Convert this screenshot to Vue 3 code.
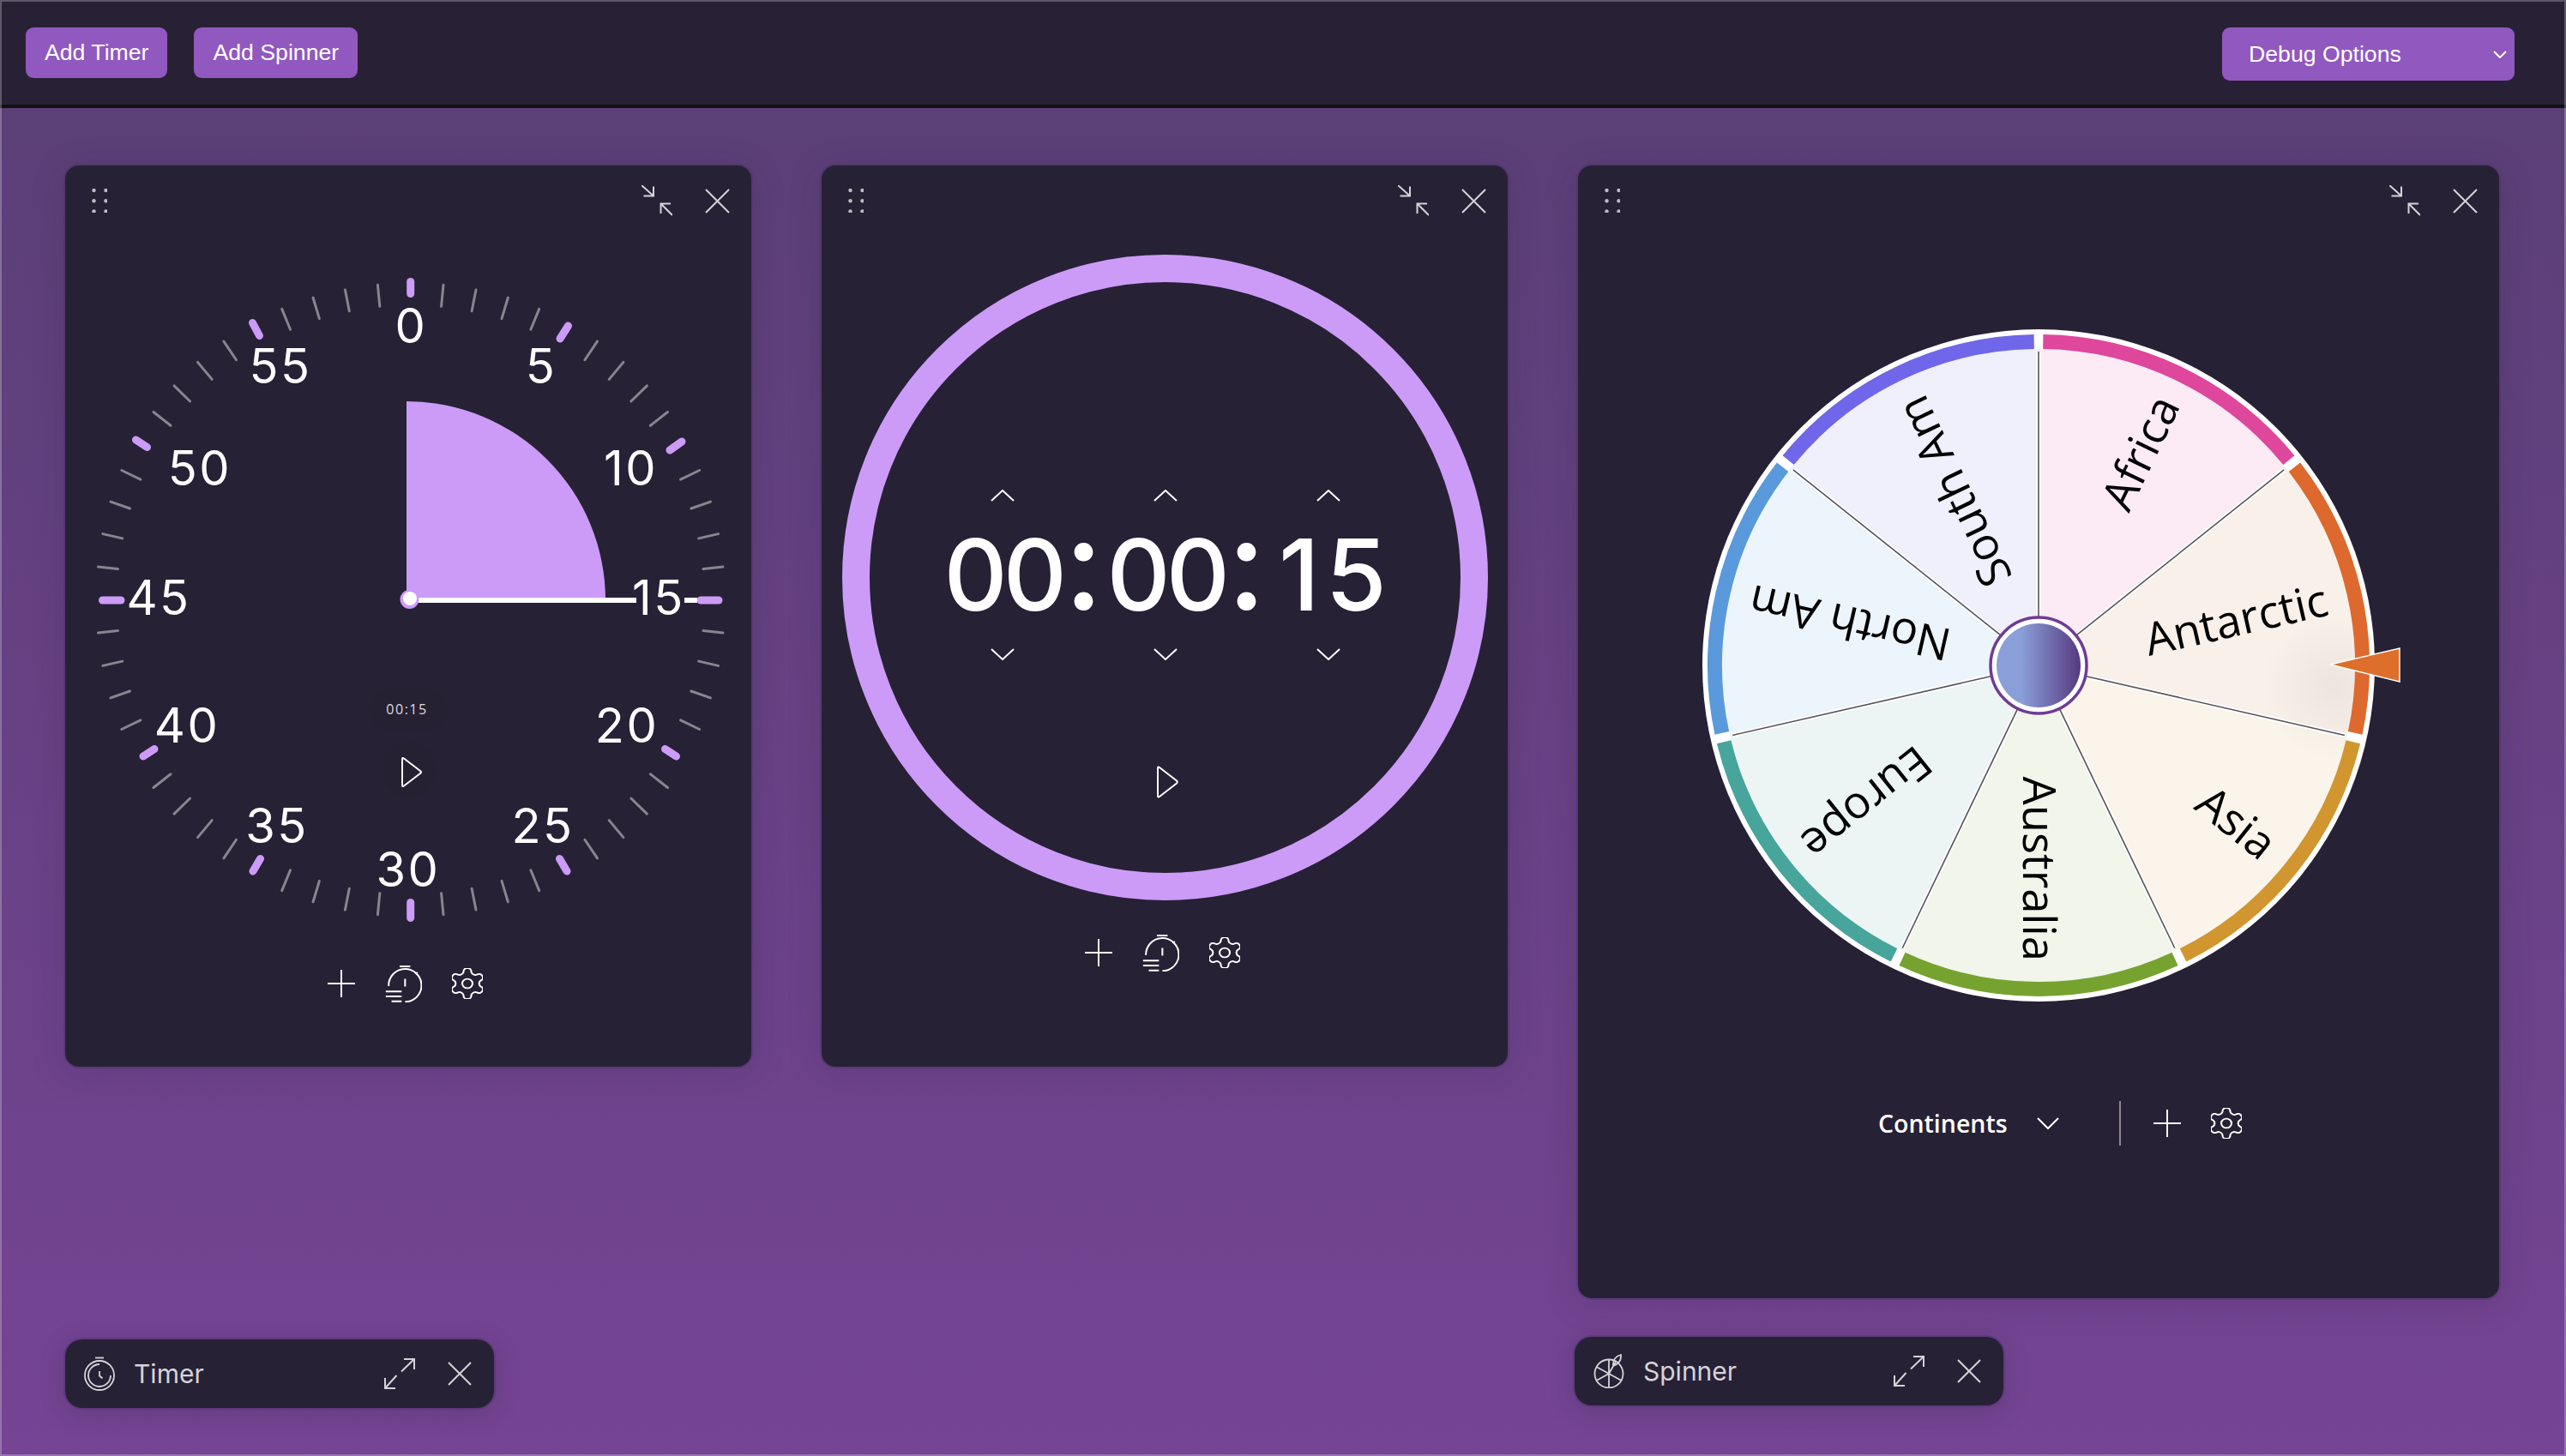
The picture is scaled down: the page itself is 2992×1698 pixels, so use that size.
<template>
  <div class="page">
    <header class="topbar">
      <button class="btn">Add Timer</button>
      <button class="btn">Add Spinner</button>
      <div class="debug-select">
        <span>Debug Options</span>
        <svg class="debug-chevron" width="16" height="9" viewBox="0 0 16 9"><path d="M1 1l7 7 7-7" /></svg>
      </div>
    </header>

    <main class="board">
      <div class="windows">
        <!-- analog timer -->
        <section class="panel panel-dial">
          <div class="panel-head">
            <svg class="grip" width="18" height="28" viewBox="0 0 18 28">
              <circle v-for="d in gripDots" :key="d.id" :cx="d.x" :cy="d.y" r="2.2" />
            </svg>
            <div class="head-actions">
              <svg class="win-icon" width="36" height="36" viewBox="0 0 36 36">
                <path d="M0 0L14 12.5M2.5 12.5H14V1.5M36 35L22.5 21.5M34 21.5H22.5V33" />
              </svg>
              <svg class="win-icon close" width="29" height="29" viewBox="0 0 29 29"><path d="M1 1l27 27M28 1L1 28" /></svg>
            </div>
          </div>

          <svg class="dial" width="800" height="845" viewBox="76 275 800 845">
            <line v-for="t in minorTicks" :key="t.id" class="tick-minor" :x1="t.x1" :y1="t.y1" :x2="t.x2" :y2="t.y2" />
            <line v-for="(t, i) in majorTicks" :key="i" class="tick-major" :x1="t[0]" :y1="t[1]" :x2="t[2]" :y2="t[3]" />
            <path class="wedge" d="M474 700V468A232 232 0 0 1 706 700Z" />
            <line class="hand" x1="477" y1="700" x2="742" y2="700" />
            <line class="hand" x1="798" y1="700" x2="813" y2="700" />
            <circle class="knob-back" cx="477.5" cy="699" r="11" />
            <circle class="knob" cx="478" cy="698" r="8" />
            <text v-for="n in dialNumbers" :key="n.label" class="dial-num" :x="n.x" :y="n.y + 20.5">{{ n.label }}</text>
            <rect class="soft" x="432" y="803" width="88" height="49" rx="22" />
            <text class="dial-time" x="474.5" y="833">00:15</text>
            <circle class="soft" cx="477" cy="898" r="32" />
            <path class="play" d="M469 885.5V915.5Q469 918 471 916.5L490 902Q492 900.5 490 899L471 884.5Q469 883 469 885.5Z" />
          </svg>

          <div class="tools tools-dial">
            <svg class="tool" width="32" height="32" viewBox="0 0 32 32"><path d="M16 0V32M0 16H32" /></svg>
            <svg class="tool stopwatch" width="43" height="43" viewBox="0 0 127 128">
              <path d="M12 71A57 57 0 1 1 69 126M50 3H87M69 46V73M105 30l7-6M2 90H57M2 107H57M22 124H57" />
            </svg>
            <svg class="tool gear" width="36" height="36" viewBox="3 2 18 20" preserveAspectRatio="none">
              <path :d="gearPath" /><circle cx="12" cy="12" r="3" />
            </svg>
          </div>
        </section>

        <!-- digital timer -->
        <section class="panel panel-digital">
          <div class="panel-head">
            <svg class="grip" width="18" height="28" viewBox="0 0 18 28">
              <circle v-for="d in gripDots" :key="d.id" :cx="d.x" :cy="d.y" r="2.2" />
            </svg>
            <div class="head-actions">
              <svg class="win-icon" width="36" height="36" viewBox="0 0 36 36">
                <path d="M0 0L14 12.5M2.5 12.5H14V1.5M36 35L22.5 21.5M34 21.5H22.5V33" />
              </svg>
              <svg class="win-icon close" width="29" height="29" viewBox="0 0 29 29"><path d="M1 1l27 27M28 1L1 28" /></svg>
            </div>
          </div>

          <div class="ring">
            <div class="chevrons up">
              <svg v-for="g in 3" :key="g" width="28" height="14" viewBox="0 0 28 14"><path d="M1 13L14 1l13 12" /></svg>
            </div>
            <div class="clock">
              <span class="clock-part">00</span><span class="clock-colon">:</span>
              <span class="clock-part">00</span><span class="clock-colon">:</span>
              <span class="clock-part clock-last">15</span>
            </div>
            <div class="chevrons down">
              <svg v-for="g in 3" :key="g" width="28" height="14" viewBox="0 0 28 14"><path d="M1 1l13 12L27 1" /></svg>
            </div>
            <svg class="ring-play" width="26" height="40" viewBox="0 0 26 40">
              <path d="M2 4V36Q2 38.500 4 37L24 21.500Q25.500 20 24 18.500L4 3Q2 1.500 2 4Z" />
            </svg>
          </div>

          <div class="tools tools-digital">
            <svg class="tool" width="32" height="32" viewBox="0 0 32 32"><path d="M16 0V32M0 16H32" /></svg>
            <svg class="tool stopwatch" width="43" height="43" viewBox="0 0 127 128">
              <path d="M12 71A57 57 0 1 1 69 126M50 3H87M69 46V73M105 30l7-6M2 90H57M2 107H57M22 124H57" />
            </svg>
            <svg class="tool gear" width="36" height="36" viewBox="3 2 18 20" preserveAspectRatio="none">
              <path :d="gearPath" /><circle cx="12" cy="12" r="3" />
            </svg>
          </div>
        </section>

        <!-- spinner wheel -->
        <section class="panel panel-wheel">
          <div class="panel-head">
            <svg class="grip" width="18" height="28" viewBox="0 0 18 28">
              <circle v-for="d in gripDots" :key="d.id" :cx="d.x" :cy="d.y" r="2.2" />
            </svg>
            <div class="head-actions">
              <svg class="win-icon" width="36" height="36" viewBox="0 0 36 36">
                <path d="M0 0L14 12.5M2.5 12.5H14V1.5M36 35L22.5 21.5M34 21.5H22.5V33" />
              </svg>
              <svg class="win-icon close" width="29" height="29" viewBox="0 0 29 29"><path d="M1 1l27 27M28 1L1 28" /></svg>
            </div>
          </div>

          <svg class="wheel" width="1074" height="905" viewBox="-537 -501 1074 905">
            <defs>
              <linearGradient id="hubFill" x1="0" y1="0" x2="1" y2="0">
                <stop offset="0.3" stop-color="#8a9ed8" />
                <stop offset="1" stop-color="#553a7e" />
              </linearGradient>
              <radialGradient id="pointerShade">
                <stop offset="0" stop-color="#000" stop-opacity="0.05" />
                <stop offset="1" stop-color="#000" stop-opacity="0" />
              </radialGradient>
              <clipPath id="faceClip"><circle r="369" /></clipPath>
            </defs>
            <circle r="392" fill="#fff" />
            <g v-for="s in slices" :key="s.name">
              <path :d="s.pie" :fill="s.pale" />
              <path :d="s.band" :stroke="s.color" class="band" />
            </g>
            <circle cx="345" cy="25" r="85" fill="url(#pointerShade)" clip-path="url(#faceClip)" />
            <g v-for="s in slices" :key="s.name + '-edge'">
              <line class="edge-light" :x1="s.x1" :y1="s.y1" :x2="s.x2" :y2="s.y2" />
              <line class="edge-dark" :x1="s.x1" :y1="s.y1" :x2="s.x2" :y2="s.y2" />
            </g>
            <text v-for="s in slices" :key="s.name + '-label'" class="slice-label" x="345" y="18"
              :transform="`rotate(${s.rot})`">{{ s.name }}</text>
            <circle r="56" class="hub-ring" />
            <circle r="49" fill="url(#hubFill)" />
            <path class="pointer" d="M340 -1L421 -20V19Z" />
          </svg>

          <div class="wheel-tools">
            <span class="list-name">Continents</span>
            <svg class="list-chevron" width="26" height="14" viewBox="0 0 26 14"><path d="M1 1l12 12L25 1" /></svg>
            <span class="tool-divider"></span>
            <svg class="tool" width="32" height="32" viewBox="0 0 32 32"><path d="M16 0V32M0 16H32" /></svg>
            <svg class="tool gear" width="36" height="36" viewBox="3 2 18 20" preserveAspectRatio="none">
              <path :d="gearPath" /><circle cx="12" cy="12" r="3" />
            </svg>
          </div>
        </section>
      </div>

      <div class="dock">
        <div class="dock-item dock-timer">
          <svg class="dock-icon" width="36" height="40" viewBox="0 0 36 40">
            <path d="M13 1.500H23" /><circle cx="18" cy="22" r="17" />
            <path d="M18 9A13 13 0 1 0 31 22M18 17v5.500l3.500 3" />
          </svg>
          <span class="dock-name">Timer</span>
          <svg class="win-icon" width="36" height="36" viewBox="0 0 36 36">
            <path d="M1 35L14.500 20M1 23V35H13M35 1L20 15.500M23 1H35V13" />
          </svg>
          <svg class="win-icon close" width="28" height="28" viewBox="0 0 28 28"><path d="M1 1l26 26M27 1L1 27" /></svg>
        </div>
        <div class="dock-item dock-spinner">
          <svg class="dock-icon" width="36" height="40" viewBox="0 0 36 40">
            <circle cx="18" cy="23" r="16.500" />
            <path d="M18 6.500V39.500M3.500 15L32.500 31M3.500 31L18 23M18 23L26 9M23 14Q22 4 32 1Q33 10 23 14Z" />
          </svg>
          <span class="dock-name">Spinner</span>
          <svg class="win-icon" width="36" height="36" viewBox="0 0 36 36">
            <path d="M1 35L14.500 20M1 23V35H13M35 1L20 15.500M23 1H35V13" />
          </svg>
          <svg class="win-icon close" width="28" height="28" viewBox="0 0 28 28"><path d="M1 1l26 26M27 1L1 27" /></svg>
        </div>
      </div>
    </main>
  </div>
</template>

<script setup>
const gearPath =
  'M12.22 2h-.44a2 2 0 0 0-2 2v.18a2 2 0 0 1-1 1.73l-.43.25a2 2 0 0 1-2 0l-.15-.08a2 2 0 0 0-2.73.73l-.22.38a2 2 0 0 0 .73 2.73l.15.1a2 2 0 0 1 1 1.72v.51a2 2 0 0 1-1 1.74l-.15.09a2 2 0 0 0-.73 2.73l.22.38a2 2 0 0 0 2.73.73l.15-.08a2 2 0 0 1 2 0l.43.25a2 2 0 0 1 1 1.73V20a2 2 0 0 0 2 2h.44a2 2 0 0 0 2-2v-.18a2 2 0 0 1 1-1.73l.43-.25a2 2 0 0 1 2 0l.15.08a2 2 0 0 0 2.73-.73l.22-.39a2 2 0 0 0-.73-2.73l-.15-.08a2 2 0 0 1-1-1.74v-.5a2 2 0 0 1 1-1.74l.15-.09a2 2 0 0 0 .73-2.73l-.22-.38a2 2 0 0 0-2.73-.73l-.15.08a2 2 0 0 1-2 0l-.43-.25a2 2 0 0 1-1-1.73V4a2 2 0 0 0-2-2z'

const gripDots = []
for (let row = 0; row < 3; row++) {
  for (let col = 0; col < 2; col++) {
    gripDots.push({ id: `${row}-${col}`, x: 2.5 + col * 14, y: 2 + row * 12.2 })
  }
}

const CX = 478.7
const CY = 699.5

// the dial in the reference isn't a true circle, it bulges on the diagonals
const minorTicks = []
for (let i = 0; i < 60; i++) {
  if (i % 5 === 0) continue
  const a = (i * 6 * Math.PI) / 180
  const s = Math.sin(a)
  const c = Math.cos(a)
  const bulge = Math.sin(2 * a) ** 2
  minorTicks.push({
    id: i,
    x1: CX + (366 + 5 * bulge) * s,
    y1: CY - (369 + 4 * bulge) * c,
    x2: CX + (343 + 3 * bulge) * s,
    y2: CY - (344 + 2 * bulge) * c
  })
}

// x1, y1, x2, y2 of the purple five-minute marks
const majorTicks = [
  [478.7, 328.5, 478.7, 342.5],
  [662.5, 380, 653, 395],
  [795, 515, 781, 525],
  [838, 700, 817, 700],
  [788.5, 882, 775.5, 873.5],
  [661, 1016, 652.5, 1001.5],
  [478.7, 1070.5, 478.7, 1052.5],
  [295, 1016, 303.5, 1001.5],
  [167, 882, 180, 873.5],
  [119.5, 700, 141, 700],
  [158.5, 513, 171.5, 521.5],
  [294.5, 376.5, 302.5, 391.5]
]

const dialNumbers = [
  { label: '0', x: 479.5, y: 379 },
  { label: '5', x: 631, y: 426 },
  { label: '10', x: 735.6, y: 545 },
  { label: '15', x: 768, y: 696 },
  { label: '20', x: 731, y: 845 },
  { label: '25', x: 633, y: 962 },
  { label: '30', x: 476, y: 1013 },
  { label: '35', x: 323, y: 962 },
  { label: '40', x: 218, y: 845 },
  { label: '45', x: 185, y: 696 },
  { label: '50', x: 233, y: 545 },
  { label: '55', x: 327, y: 426 }
]

const wheelItems = [
  { name: 'Africa', color: '#de479c', pale: '#fcebf5' },
  { name: 'Antarctic', color: '#dd692e', pale: '#f9f0ea' },
  { name: 'Asia', color: '#d29630', pale: '#fbf4ea' },
  { name: 'Australia', color: '#76a32f', pale: '#f1f5ea' },
  { name: 'Europe', color: '#47a59c', pale: '#ecf5f4' },
  { name: 'North Am', color: '#5a99dc', pale: '#edf5fc' },
  { name: 'South Am', color: '#6f66ea', pale: '#f0effc' }
]

function polar(r, deg) {
  const a = (deg * Math.PI) / 180
  return [r * Math.sin(a), -r * Math.cos(a)]
}

const STEP = 360 / 7
const slices = wheelItems.map((item, i) => {
  const a0 = i * STEP
  const a1 = a0 + STEP
  const [px0, py0] = polar(369, a0)
  const [px1, py1] = polar(369, a1)
  const [bx0, by0] = polar(377.5, a0 + 0.8)
  const [bx1, by1] = polar(377.5, a1 - 0.8)
  const [ex1, ey1] = polar(56, a0)
  const [ex2, ey2] = polar(366, a0)
  return {
    ...item,
    pie: `M0 0L${px0} ${py0}A369 369 0 0 1 ${px1} ${py1}Z`,
    band: `M${bx0} ${by0}A377.5 377.5 0 0 1 ${bx1} ${by1}`,
    x1: ex1,
    y1: ey1,
    x2: ex2,
    y2: ey2,
    rot: a0 + STEP / 2 - 90
  }
})
</script>

<style scoped>
.page {
  position: relative;
  width: 100%;
  height: 1698px;
  overflow: hidden;
  background: linear-gradient(180deg, #5b3f77 0%, #5b3f77 8%, #754494 100%);
  font-family: "Inter", sans-serif;
}

/* window edge of the screenshot */
.page::after {
  content: "";
  position: absolute;
  inset: 0;
  border: 2px solid rgba(255, 255, 255, 0.25);
  pointer-events: none;
}

.topbar {
  display: flex;
  align-items: flex-start;
  gap: 31px;
  box-sizing: border-box;
  height: 126px;
  padding: 32px 60px 0 30px;
  background: #282136;
  border-bottom: 4px solid #111013;
}

.btn {
  height: 59px;
  padding: 0 22px;
  border: none;
  border-radius: 9px;
  background: #9158bf;
  color: #fff;
  font-family: "Liberation Sans", Arial, sans-serif;
  font-size: 26.67px;
}

.debug-select {
  display: flex;
  align-items: center;
  justify-content: space-between;
  box-sizing: border-box;
  width: 341px;
  height: 62px;
  margin-left: auto;
  padding: 0 9px 0 31px;
  border-radius: 9px;
  background: #9158bf;
  color: #fff;
  font-family: "Liberation Sans", Arial, sans-serif;
  font-size: 26.67px;
}

.debug-chevron path {
  fill: none;
  stroke: #fff;
  stroke-width: 2;
}

.board {
  padding: 67px 0 0 76px;
}

.windows {
  display: flex;
  align-items: flex-start;
  gap: 82px;
  height: 1321px;
}

.panel {
  box-sizing: border-box;
  border-radius: 16px;
  background: #272135;
  box-shadow: 0 0 0 2px rgba(60, 40, 90, 0.25), 0 6px 40px rgba(39, 33, 54, 0.18);
}

.panel-dial,
.panel-digital {
  width: 800px;
  height: 1051px;
}

.panel-wheel {
  width: 1074px;
  height: 1321px;
}

.panel-head {
  display: flex;
  align-items: center;
  justify-content: space-between;
  height: 82px;
  padding: 0 25px 0 31px;
}

.grip circle {
  fill: rgba(255, 255, 255, 0.7);
}

.head-actions {
  display: flex;
  align-items: center;
  gap: 38px;
}

.win-icon path {
  fill: none;
  stroke: #d5d3d8;
  stroke-width: 2;
}

.dial,
.wheel {
  display: block;
}

.tick-minor {
  stroke: rgba(255, 255, 255, 0.45);
  stroke-width: 3;
  stroke-linecap: round;
}

.tick-major {
  stroke: #cc9bf8;
  stroke-width: 9;
  stroke-linecap: round;
}

.wedge {
  fill: #cc9bf8;
}

.hand {
  stroke: #fff;
  stroke-width: 6;
}

.knob-back {
  fill: #cc9bf8;
}

.knob {
  fill: #fff;
}

.dial-num {
  fill: #fff;
  font-family: "Inter", sans-serif;
  font-size: 56px;
  letter-spacing: 2.5px;
  text-anchor: middle;
}

.dial-time {
  fill: rgba(255, 255, 255, 0.85);
  font-family: "Open Sans", sans-serif;
  font-size: 16px;
  letter-spacing: 1.5px;
  text-anchor: middle;
}

.soft {
  fill: rgba(30, 32, 40, 0.1);
}

.play,
.ring-play path {
  fill: none;
  stroke: #fff;
  stroke-width: 2;
}

.tools {
  display: flex;
  align-items: center;
  justify-content: center;
  gap: 35px;
  height: 54px;
}

.tools-dial {
  padding-right: 7px;
}

.tools-digital {
  padding-right: 6px;
}

.tool path,
.tool circle {
  fill: none;
  stroke: #fff;
  stroke-width: 2;
}

.stopwatch path {
  stroke-width: 6;
}

.gear path,
.gear circle {
  stroke-width: 1.05;
}

.ring {
  position: relative;
  display: flex;
  flex-direction: column;
  align-items: center;
  box-sizing: border-box;
  width: 753px;
  height: 753px;
  margin: 22px 0 34px 24px;
  border: 32px solid #cc9bf8;
  border-radius: 50%;
}

.chevrons {
  display: flex;
  justify-content: center;
  gap: 162px;
}

.chevrons svg path {
  fill: none;
  stroke: #fff;
  stroke-width: 2;
}

.chevrons.up {
  margin-top: 242px;
}

.chevrons.down {
  margin-top: 20px;
}

.clock {
  display: flex;
  align-items: center;
  justify-content: center;
  height: 130px;
  margin-top: 21px;
  color: #fff;
  font-size: 115px;
  font-weight: 450;
  letter-spacing: -5px;
  line-height: 130px;
}

.clock-part {
  width: 136px;
  text-align: center;
  white-space: nowrap;
}

.clock-last {
  letter-spacing: 7px;
  transform: translateX(9px);
}

.clock-colon {
  width: 54px;
  text-align: center;
  font-size: 150px;
  font-weight: 500;
  letter-spacing: 0;
  transform: translateY(-14px);
}

.ring-play {
  margin-top: 122px;
  margin-left: 4px;
}

.wheel .band {
  fill: none;
  stroke-width: 17;
}

.edge-light {
  stroke: #fff;
  stroke-width: 5;
}

.edge-dark {
  stroke: #55525a;
  stroke-width: 1.6;
}

.slice-label {
  fill: #000;
  font-family: "Open Sans", sans-serif;
  font-size: 52.5px;
  text-anchor: end;
}

.hub-ring {
  fill: #fff;
  stroke: #6f3c93;
  stroke-width: 3.5;
}

.pointer {
  fill: #dd6f2b;
  stroke: #fff;
  stroke-width: 1.5;
}

.wheel-tools {
  display: flex;
  align-items: center;
  height: 56px;
  margin-top: 102px;
  padding-left: 350px;
}

.list-name {
  width: 147px;
  color: #fff;
  font-family: "Open Sans", sans-serif;
  font-size: 28.5px;
  font-weight: 600;
  white-space: nowrap;
}

.list-chevron {
  margin-left: 38px;
}

.list-chevron path {
  fill: none;
  stroke: #fff;
  stroke-width: 2;
}

.tool-divider {
  width: 2px;
  height: 52px;
  margin: 0 38px 0 70px;
  background: #8d8994;
}

.wheel-tools .gear {
  margin-left: 35px;
}

.dock {
  display: flex;
  align-items: flex-start;
  gap: 1260px;
}

.dock-item {
  display: flex;
  align-items: center;
  box-sizing: border-box;
  width: 500px;
  height: 80px;
  padding: 0 26px 0 22px;
  border-radius: 20px;
  background: #272135;
  box-shadow: 0 0 0 2px rgba(60, 40, 90, 0.25), 0 6px 30px rgba(39, 33, 54, 0.22);
}

.dock-timer {
  margin-top: 48px;
}

.dock-spinner {
  margin-top: 45px;
}

.dock-icon path,
.dock-icon circle {
  fill: none;
  stroke: #d5d3d8;
  stroke-width: 1.8;
}

.dock-name {
  flex: 1;
  margin-left: 22px;
  color: #d5d3d8;
  font-size: 30px;
}

.dock-item .close {
  margin-left: 38px;
}
</style>

<style>
html,
body {
  margin: 0;
  background: #754494;
}
</style>
